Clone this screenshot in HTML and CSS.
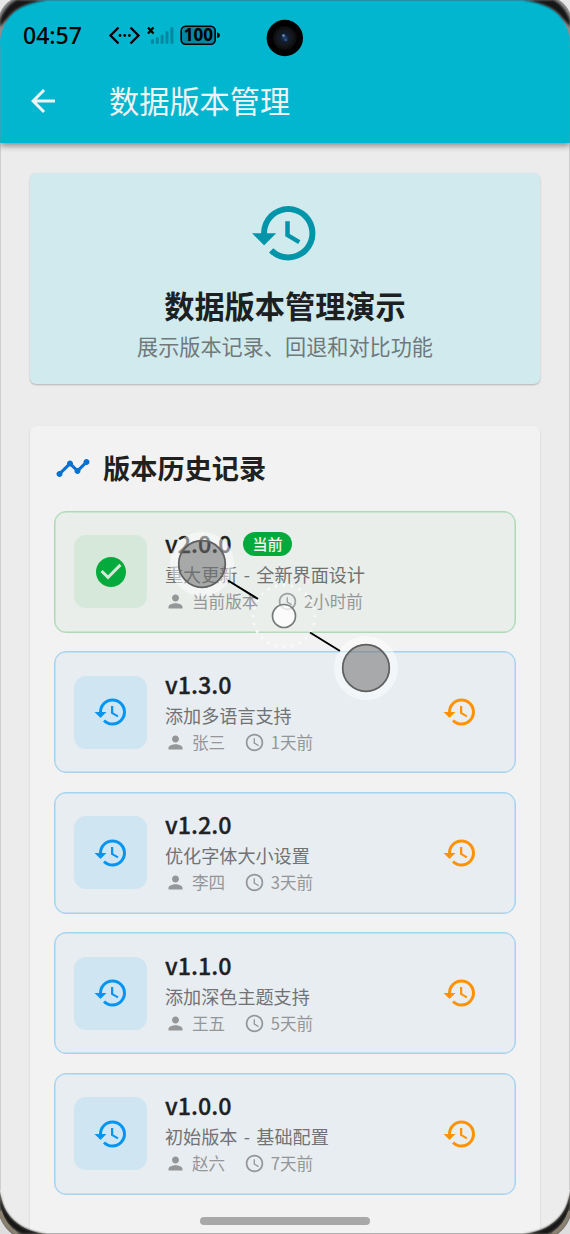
FILE: index.html
```
<!DOCTYPE html>
<html lang="zh-CN">
<head>
<meta charset="utf-8">
<title>数据版本管理</title>
<link rel="stylesheet" href="styles.css">
</head>
<body>
<svg class="symbols" width="0" height="0">
  <symbol id="history" viewBox="0 0 24 24"><path d="M13 3a9 9 0 0 0-9 9H1l3.89 3.89.07.14L9 12H6c0-3.87 3.13-7 7-7s7 3.13 7 7-3.13 7-7 7c-1.93 0-3.68-.79-4.94-2.06l-1.42 1.42A8.954 8.954 0 0 0 13 21a9 9 0 0 0 0-18zm-1 5v5l4.28 2.54.72-1.21-3.5-2.08V8H12z"/></symbol>
  <symbol id="person" viewBox="0 0 24 24"><path d="M12 12c2.21 0 4-1.79 4-4s-1.79-4-4-4-4 1.79-4 4 1.79 4 4 4zm0 2c-2.67 0-8 1.34-8 4v2h16v-2c0-2.66-5.33-4-8-4z"/></symbol>
  <symbol id="clock" viewBox="0 0 24 24"><path d="M11.99 2C6.47 2 2 6.48 2 12s4.47 10 9.99 10C17.52 22 22 17.52 22 12S17.52 2 11.99 2zM12 20c-4.42 0-8-3.58-8-8s3.58-8 8-8 8 3.58 8 8-3.58 8-8 8zm.5-13H11v6l5.25 3.15.75-1.23-4.5-2.67z"/></symbol>
  <symbol id="check" viewBox="0 0 24 24"><path d="M12 2C6.48 2 2 6.48 2 12s4.48 10 10 10 10-4.48 10-10S17.52 2 12 2zm-2 15-5-5 1.41-1.41L10 14.17l7.59-7.59L19 8l-9 9z"/></symbol>
</svg>
<div class="phone">
  <header class="top">
    <div class="status">
      <span class="time">04:57</span>
      <svg class="status-icons" width="114" height="30" viewBox="107 20 114 30">
        <g fill="none" stroke="#000" stroke-width="2.3"><path d="M118.500 27.500 110.500 35.500l8 8M130.500 27.500l8 8-8 8"/><path d="m148 27.500 5.500 6m0-6-5.500 6"/></g>
        <circle cx="120" cy="35.500" r="1.400"/><circle cx="124.700" cy="35.500" r="1.400"/><circle cx="129.400" cy="35.500" r="1.400"/>
        <g stroke="#0288a0" stroke-width="3" stroke-linecap="round"><path d="M152.500 40.500v2M157.300 38.500v4M162.100 36v6.500M167 32.500v10M171.900 28.500v14"/></g>
        <rect x="181.200" y="26.200" width="34" height="18" rx="4.500" fill="#0288a0" stroke="#000" stroke-width="1.600"/>
        <path d="M217 32.500q2.800 0 2.800 2.700t-2.800 2.700z"/>
        <text class="battery-text" x="198.300" y="41.200" text-anchor="middle">100</text>
      </svg>
    </div>
    <div class="appbar">
      <svg class="back" width="36" height="36" viewBox="0 0 24 24" fill="#eef3f4"><path d="M20 11H7.830l5.590-5.590L12 4l-8 8 8 8 1.410-1.410L7.830 13H20v-2z"/></svg>
      <h1 class="title">数据版本管理</h1>
    </div>
  </header>
  <main class="content">
    <section class="hero">
      <svg class="hero-icon"><use href="#history"/></svg>
      <h2 class="hero-title">数据版本管理演示</h2>
      <p class="hero-text">展示版本记录、回退和对比功能</p>
    </section>
    <section class="panel">
      <div class="panel-head">
        <svg width="36" height="36" viewBox="0 0 24 24" fill="#0671d0"><path d="M23 8c0 1.100-.9 2-2 2-.18 0-.35-.02-.51-.07l-3.560 3.550c.05.16.07.34.07.52 0 1.100-.9 2-2 2s-2-.9-2-2c0-.18.02-.36.07-.52l-2.550-2.550c-.16.05-.34.07-.52.07s-.36-.02-.52-.07l-4.550 4.560c.05.16.07.33.07.51 0 1.100-.9 2-2 2s-2-.9-2-2 .9-2 2-2c.18 0 .35.02.51.07l4.560-4.550C8.020 9.360 8 9.180 8 9c0-1.100.9-2 2-2s2 .9 2 2c0 .18-.02.36-.07.52l2.550 2.550c.16-.05.34-.07.52-.07s.36.020.52.07l3.550-3.560C19.020 8.350 19 8.180 19 8c0-1.100.9-2 2-2s2 .9 2 2z"/></svg>
        <h2 class="panel-title">版本历史记录</h2>
      </div>
      <div class="list">
        <article class="item current">
          <div class="tile"><svg class="icon"><use href="#check"/></svg></div>
          <div class="info">
            <div class="version">v2.0.0<span class="badge">当前</span></div>
            <div class="desc">重大更新 - 全新界面设计</div>
            <div class="meta"><svg><use href="#person"/></svg><span class="who">当前版本</span><svg><use href="#clock"/></svg><span>2小时前</span></div>
          </div>
        </article>
        <article class="item">
          <div class="tile"><svg class="icon"><use href="#history"/></svg></div>
          <div class="info">
            <div class="version">v1.3.0</div>
            <div class="desc">添加多语言支持</div>
            <div class="meta"><svg><use href="#person"/></svg><span class="who">张三</span><svg><use href="#clock"/></svg><span>1天前</span></div>
          </div>
          <svg class="icon restore"><use href="#history"/></svg>
        </article>
        <article class="item">
          <div class="tile"><svg class="icon"><use href="#history"/></svg></div>
          <div class="info">
            <div class="version">v1.2.0</div>
            <div class="desc">优化字体大小设置</div>
            <div class="meta"><svg><use href="#person"/></svg><span class="who">李四</span><svg><use href="#clock"/></svg><span>3天前</span></div>
          </div>
          <svg class="icon restore"><use href="#history"/></svg>
        </article>
        <article class="item">
          <div class="tile"><svg class="icon"><use href="#history"/></svg></div>
          <div class="info">
            <div class="version">v1.1.0</div>
            <div class="desc">添加深色主题支持</div>
            <div class="meta"><svg><use href="#person"/></svg><span class="who">王五</span><svg><use href="#clock"/></svg><span>5天前</span></div>
          </div>
          <svg class="icon restore"><use href="#history"/></svg>
        </article>
        <article class="item">
          <div class="tile"><svg class="icon"><use href="#history"/></svg></div>
          <div class="info">
            <div class="version">v1.0.0</div>
            <div class="desc">初始版本 - 基础配置</div>
            <div class="meta"><svg><use href="#person"/></svg><span class="who">赵六</span><svg><use href="#clock"/></svg><span>7天前</span></div>
          </div>
          <svg class="icon restore"><use href="#history"/></svg>
        </article>
      </div>
    </section>
  </main>
  <svg class="overlay" viewBox="0 0 570 1234">
    <defs>
      <radialGradient id="lens"><stop offset="0" stop-color="#26476f"/><stop offset=".35" stop-color="#101c30"/><stop offset=".6" stop-color="#16191d"/><stop offset="1" stop-color="#090a0b"/></radialGradient>
      <filter id="soft" x="-10%" y="-10%" width="120%" height="120%"><feGaussianBlur stdDeviation="1"/></filter>
    </defs>
    <!-- front camera -->
    <circle cx="284.800" cy="38" r="18.200" fill="#000"/>
    <circle cx="284.800" cy="38" r="12" fill="url(#lens)"/>
    <circle cx="283.500" cy="35.500" r="1.300" fill="#6f98c4"/><circle cx="286" cy="40" r="1.300" fill="#2f5288"/>
    <!-- pinch gesture -->
    <circle cx="284" cy="616" r="31" fill="#fff" fill-opacity=".1"/>
    <circle cx="284" cy="616" r="31" fill="none" stroke="#f8faf9" stroke-width="3" stroke-linecap="round" stroke-dasharray="0 8.110"/>
    <circle cx="284" cy="616" r="11.500" fill="#fff" fill-opacity=".72" stroke="#777b79" stroke-width="1.700"/>
    <g fill="none" stroke="#fff" stroke-opacity=".48" stroke-width="8"><circle cx="202" cy="564" r="28"/><circle cx="366" cy="668" r="28"/></g>
    <g fill="#717171" fill-opacity=".55"><circle cx="202" cy="564" r="24"/><circle cx="366" cy="668" r="24"/></g>
    <g fill="none" stroke="#606060" stroke-width="1.700"><circle cx="202" cy="564" r="23.300"/><circle cx="366" cy="668" r="23.300"/></g>
    <path d="m228 580.500 30 18.500m52 33.500 30 18.500" stroke="#000" stroke-width="2"/>
    <!-- home indicator and device edge -->
    <rect x="200" y="1217" width="170" height="8" rx="4" fill="#a8a8a8"/>
    <path d="M0 0H570V1H0zM0 1233H570V1234H0z" fill="#555" opacity=".4"/>
    <path d="M.5 44V1190M569.500 44V1190" stroke="#888" stroke-opacity=".3"/>
    <g id="top-corner">
      <path d="M0 0H47C20 1 2 17 0 42z" fill="#8d8d8d"/>
      <path d="M0 20C3 11 9 4 16 0H47C25 3 13 10 7 19C4 22 2 24 0 27z" fill="#151515" filter="url(#soft)"/>
      <path d="M0 0H11C6 3 2 8 0 13z" fill="#e7e7e7"/>
    </g>
    <use href="#top-corner" transform="matrix(-1 0 0 1 570 0)"/>
    <g id="bottom-corner">
      <path d="M0 1190C2 1215 20 1232 47 1234H0z" fill="#77736c"/>
      <path d="M0 1193C2 1215 20 1232 47 1234H22C8 1228 0 1213 0 1202z" fill="#151515" filter="url(#soft)"/>
      <path d="M0 1211C3 1221 9 1229 17 1234" fill="none" stroke="#8b8171" stroke-width="3.500"/>
      <path d="M0 1218C3 1225 7 1230 12 1234H0z" fill="#dedede"/>
    </g>
    <use href="#bottom-corner" transform="matrix(-1 0 0 1 570 0)"/>
  </svg>
</div>
</body>
</html>
```
FILE: styles.css
```
* { box-sizing: border-box; }
body { margin: 0; font-family: "Noto Sans CJK SC", "Noto Sans", sans-serif; overflow: hidden; }
h1, h2, p { margin: 0; }
svg { display: block; flex: none; }
.symbols { display: none; }
.phone { position: relative; width: 570px; height: 1234px; overflow: hidden; background: #ececec; }
.top { height: 143px; background: #03b6cf; box-shadow: 0 3px 6px rgba(0, 0, 0, .4); }
.status { display: flex; align-items: center; height: 60px; padding: 10px 0 0 23px; }
.time { width: 84px; font-size: 23px; line-height: 30px; font-weight: 500; font-family: "Noto Sans", sans-serif; white-space: nowrap; }
.battery-text { font: 700 17px "Noto Sans", sans-serif; }
.appbar { display: flex; align-items: center; height: 82px; padding-left: 24.5px; }
.title { margin-left: 48.5px; padding-bottom: 2px; font-size: 30.2px; line-height: 42px; font-weight: 400; color: #eef3f4; }
.content { padding: 30px 30px 0; }
.hero { display: flex; flex-direction: column; align-items: center; height: 211px; padding-top: 24px; border-radius: 6px; background: #d0eaed; box-shadow: 0 1px 2px rgba(0, 0, 0, .24); }
.hero-icon { width: 72.5px; height: 72.5px; fill: #0295a9; }
.hero-title { margin-top: 13.5px; font-size: 30.2px; line-height: 44px; font-weight: 700; color: #1c2021; }
.hero-text { margin-top: 3px; font-size: 21.15px; line-height: 32px; color: #707879; }
.panel { height: 850px; margin-top: 42px; padding: 24px; border-radius: 6px; background: #f2f2f2; box-shadow: 0 1px 2px rgba(0, 0, 0, .15); }
.panel-head { display: flex; align-items: center; gap: 12px; height: 36px; padding-left: 1px; }
.panel-title { padding-bottom: 2px; font-size: 27.2px; line-height: 34px; font-weight: 700; color: #202020; }
.list { display: flex; flex-direction: column; gap: 18.6px; margin-top: 24.6px; }
.item { display: flex; align-items: center; gap: 18px; height: 122px; padding: 0 37px 0 19px; border: 1px solid #a4d3f0; border-radius: 12px; background: #e8edf1; box-shadow: inset 0 0 0 .5px #a4d3f0; }
.current { border-color: #addab6; background: #e9eeea; box-shadow: inset 0 0 0 .5px #addab6; }
.tile { display: grid; place-items: center; width: 73px; height: 73px; border-radius: 12px; background: #cfe5f2; flex: none; }
.current .tile { background: #d5e8d9; }
.icon { width: 36px; height: 36px; fill: #0595f1; }
.current .icon { fill: #05aa3d; }
.restore { fill: #ff9203; }
.info { flex: 1; padding-bottom: 2px; white-space: nowrap; }
.version { display: flex; align-items: center; gap: 12px; height: 33px; font-size: 23.3px; line-height: 33px; font-weight: 500; color: #202123; -webkit-text-stroke: .3px #202123; }
.badge { height: 24px; padding: 0 9px; border-radius: 12px; background: #05aa3d; color: #f0f5f1; font-size: 15.1px; line-height: 22px; -webkit-text-stroke: 0; }
.desc { height: 28px; font-size: 18.1px; line-height: 28px; word-spacing: 2.3px; color: #707274; }
.meta { display: flex; align-items: center; height: 26px; font-size: 16.6px; line-height: 26px; color: #949698; }
.meta svg { width: 21px; height: 21px; margin: 1px 6px 0 0; fill: #949698; }
.who { margin-right: 18.5px; }
.overlay { position: absolute; inset: 0; width: 570px; height: 1234px; pointer-events: none; }
```
